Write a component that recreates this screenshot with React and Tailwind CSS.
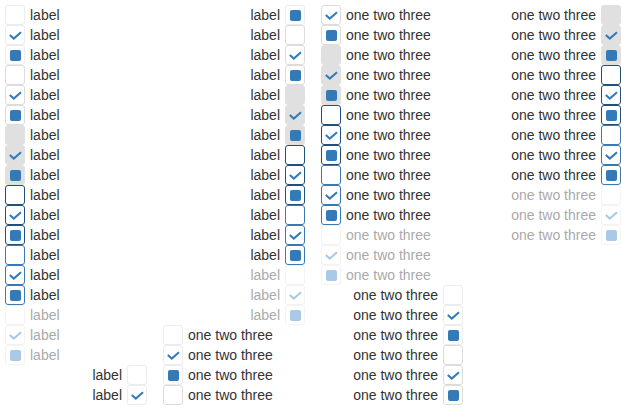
import React from 'react';

// visual states, each rendered unchecked / checked / indeterminate
const STATES = [
    { box: 'border-[#ececec] bg-white', mark: 'text-[#337ab7]', text: 'text-[#333]' },
    { box: 'border-[#dcdcdc] bg-white', mark: 'text-[#337ab7]', text: 'text-[#333]' },
    { box: 'border-[#e0e0e0] bg-[#e0e0e0]', mark: 'text-[#337ab7]', text: 'text-[#333]' },
    { box: 'border-[#1f4f7d] bg-white', mark: 'text-[#337ab7]', text: 'text-[#333]' },
    { box: 'border-[#3a78b4] bg-white', mark: 'text-[#337ab7]', text: 'text-[#333]' },
    { box: 'border-[#f3f3f3] bg-white', mark: 'text-[#a9c9e6]', text: 'text-[#aaa]' },
];

const VALUES = ['off', 'on', 'mixed'];

const Box = ({ state, value }) => (
    <span className={`w-5 h-5 shrink-0 border rounded-[3px] flex items-center justify-center ${state.box} ${state.mark}`}>
        {value === 'on' && (
            <svg width="20" height="20" viewBox="0 0 20 20" className="-m-px">
                <polyline points="4.8,10 8.8,13.6 16,7.2" fill="none" stroke="currentColor" strokeWidth="2" />
            </svg>
        )}
        {value === 'mixed' && <span className="w-[11px] h-[11px] rounded-[2px] bg-current" />}
    </span>
);

const Item = ({ state, value, label, before }) => (
    <div className={`w-[142px] h-5 flex items-center gap-[5px] ${before ? 'flex-row-reverse' : ''}`}>
        <Box state={state} value={value} />
        <span className={`text-[14px] leading-5 whitespace-nowrap ${state.text}`}>{label}</span>
    </div>
);

const GROUPS = [
    { label: 'label', before: false },
    { label: 'label', before: true },
    { label: 'one two three', before: false },
    { label: 'one two three', before: true },
];

export default function App() {
    return (
        <div
            className="h-[410px] w-[621px] overflow-hidden bg-white pt-[5px] pb-[5px] pl-[5px] flex flex-col flex-wrap content-start gap-x-4"
            style={{ fontFamily: '"Liberation Sans", Arial, sans-serif' }}
        >
            {GROUPS.map((g, gi) =>
                STATES.map((s, si) =>
                    VALUES.map((v) => (
                        <Item key={`${gi}-${si}-${v}`} state={s} value={v} label={g.label} before={g.before} />
                    ))
                )
            )}
        </div>
    );
}
